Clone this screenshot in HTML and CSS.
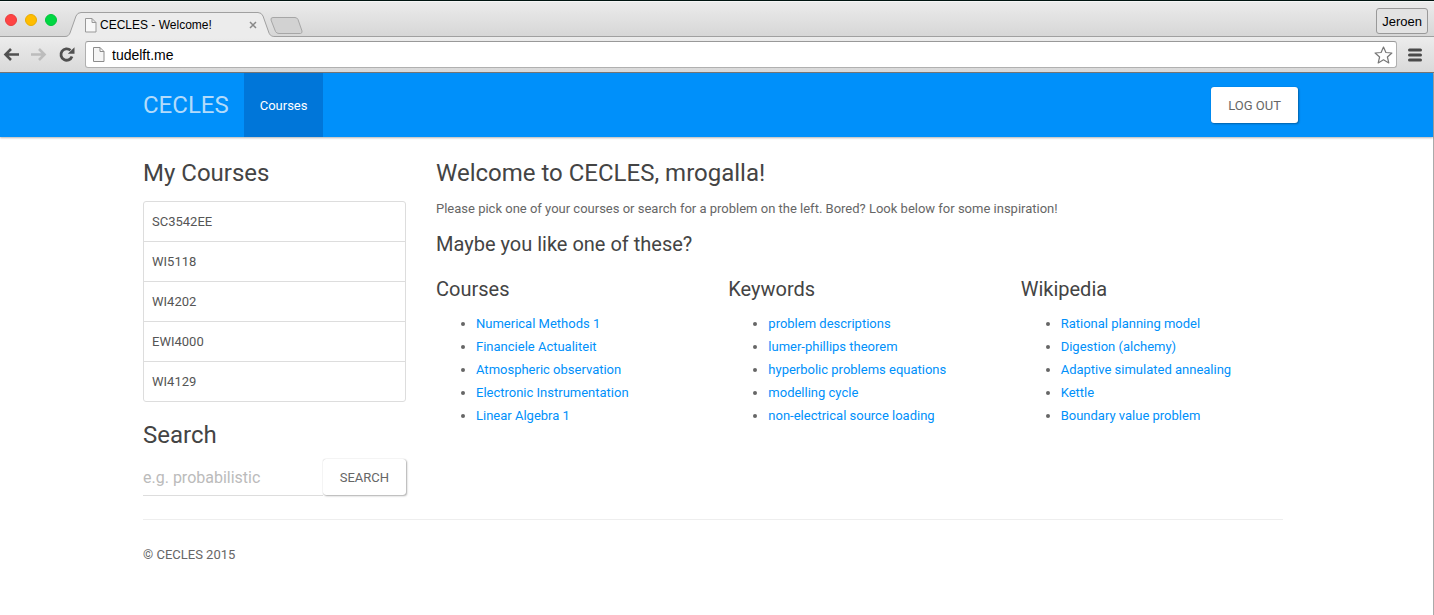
FILE: index.html
```html
<!DOCTYPE html>
<html lang="en">
<head>
<meta charset="utf-8">
<title>CECLES - Welcome!</title>
<link rel="stylesheet" href="styles.css">
</head>
<body>
<div class="browser">
  <div class="titlebar">
    <div class="lights"><span class="light red"></span><span class="light yellow"></span><span class="light green"></span></div>
    <div class="tab">
      <svg class="tab-shape" width="210" height="25" viewBox="0 0 210 25" aria-hidden="true">
        <path d="M0 24.5C3 24.5 4 23 5 21L11 4Q12.500 .5 16 .5H193Q196.500 .5 198 4L204 21C205 23 206 24.500 210 24.500V25H0Z" fill="#ececec"/>
        <path d="M0 24.500C3 24.500 4 23 5 21L11 4Q12.500 .5 16 .5H193Q196.500 .5 198 4L204 21C205 23 206 24.500 210 24.500" fill="none" stroke="#a0a0a0"/>
      </svg>
      <div class="tab-content">
        <svg width="12" height="15" viewBox="0 0 12 15" aria-hidden="true"><path d="M.5.5H7L11 4.500V14H.5ZM7 .5V4.500H11" fill="#f8f8f8" stroke="#999"/></svg>
        <span class="tab-title">CECLES - Welcome!</span>
        <button class="tab-close" aria-label="Close tab"><svg width="8" height="8" viewBox="0 0 8 8"><path d="M1 1L7 7M7 1L1 7" stroke="#888" stroke-width="1.500"/></svg></button>
      </div>
    </div>
    <button class="new-tab" aria-label="New tab"><svg width="33" height="17" viewBox="0 0 33 17"><path d="M3 .5H25Q27 .5 28 2.500L32 14Q32.500 16 30.500 16.500H9Q6.500 16.500 5.500 14.500L1 3Q.5.5 3 .5Z" fill="#d2d2d2" stroke="#a6a6a6"/></svg></button>
    <button class="profile">Jeroen</button>
  </div>
  <div class="toolbar">
    <div class="history">
      <button aria-label="Back"><svg width="18" height="16" viewBox="0 0 18 16"><path d="M17 7.500H3M9 2L3.500 7.500L9 13" fill="none" stroke="#505050" stroke-width="2.600"/></svg></button>
      <button aria-label="Forward"><svg width="18" height="16" viewBox="0 0 18 16"><path d="M1 7.500H15M9 2L14.500 7.500L9 13" fill="none" stroke="#bcbcbc" stroke-width="2.600"/></svg></button>
      <button aria-label="Reload"><svg width="18" height="16" viewBox="0 0 18 16"><path d="M12.500 3.300A5.700 5.700 0 1 0 14 9.500" fill="none" stroke="#505050" stroke-width="2.800"/><path d="M16.500 .3V6.700H9.800Z" fill="#505050"/></svg></button>
    </div>
    <div class="address">
      <svg width="12" height="15" viewBox="0 0 12 15" aria-hidden="true"><path d="M.5.5H7L11 4.500V14.500H.5ZM7 .5V4.500H11" fill="#f5f5f5" stroke="#8c8c8c"/></svg>
      <input class="url" type="text" value="tudelft.me" aria-label="Address">
      <button class="star" aria-label="Bookmark"><svg width="19" height="18" viewBox="0 0 19 18"><path d="M9.500 1L11.900 6.500L17.900 7L13.400 11L14.800 16.900L9.500 13.800L4.200 16.900L5.600 11L1.100 7L7.100 6.500Z" fill="#fff" stroke="#777" stroke-width="1.200" stroke-linejoin="round"/></svg></button>
    </div>
    <button class="menu" aria-label="Menu"><svg width="14" height="14" viewBox="0 0 14 14"><path d="M1.500 2H12.500M1.500 7H12.500M1.500 12H12.500" stroke="#4a4a4a" stroke-width="3" stroke-linecap="round"/></svg></button>
  </div>
</div>
<div class="page">
  <nav class="navbar">
    <div class="container nav-row">
      <a class="brand" href="#">CECLES</a>
      <a class="nav-link" href="#">Courses</a>
      <button class="btn logout">LOG OUT</button>
    </div>
  </nav>
  <div class="content">
    <div class="container">
      <div class="columns">
        <aside class="sidebar">
          <h3>My Courses</h3>
          <ul class="course-list">
            <li><a href="#">SC3542EE</a></li>
            <li><a href="#">WI5118</a></li>
            <li><a href="#">WI4202</a></li>
            <li><a href="#">EWI4000</a></li>
            <li><a href="#">WI4129</a></li>
          </ul>
          <h3><label for="q">Search</label></h3>
          <form class="search">
            <input id="q" type="text" placeholder="e.g. probabilistic">
            <button class="btn" type="button">SEARCH</button>
          </form>
        </aside>
        <main class="main">
          <h3>Welcome to CECLES, mrogalla!</h3>
          <p>Please pick one of your courses or search for a problem on the left. Bored? Look below for some inspiration!</p>
          <h4>Maybe you like one of these?</h4>
          <div class="suggestions">
            <section>
              <h4>Courses</h4>
              <ul>
                <li><a href="#">Numerical Methods 1</a></li>
                <li><a href="#">Financiele Actualiteit</a></li>
                <li><a href="#">Atmospheric observation</a></li>
                <li><a href="#">Electronic Instrumentation</a></li>
                <li><a href="#">Linear Algebra 1</a></li>
              </ul>
            </section>
            <section>
              <h4>Keywords</h4>
              <ul>
                <li><a href="#">problem descriptions</a></li>
                <li><a href="#">lumer-phillips theorem</a></li>
                <li><a href="#">hyperbolic problems equations</a></li>
                <li><a href="#">modelling cycle</a></li>
                <li><a href="#">non-electrical source loading</a></li>
              </ul>
            </section>
            <section>
              <h4>Wikipedia</h4>
              <ul>
                <li><a href="#">Rational planning model</a></li>
                <li><a href="#">Digestion (alchemy)</a></li>
                <li><a href="#">Adaptive simulated annealing</a></li>
                <li><a href="#">Kettle</a></li>
                <li><a href="#">Boundary value problem</a></li>
              </ul>
            </section>
          </div>
        </main>
      </div>
      <footer class="footer">© CECLES 2015</footer>
    </div>
  </div>
</div>
</body>
</html>
```

FILE: styles.css
```css
* { box-sizing: border-box; }
body {
  margin: 0;
  min-height: 100vh;
  display: flex;
  flex-direction: column;
  background: #fff;
  color: #666;
  font: 13px/23px Roboto, "Liberation Sans", sans-serif;
}
button { margin: 0; padding: 0; border: 0; background: none; font: inherit; color: inherit; }
svg { display: block; }
a { color: #0090fa; text-decoration: none; }

/* Browser window */
.browser {
  border-top: 1px solid #001410;
  border-bottom: 1px solid #777;
  background: #e4e4e4;
  font-family: "Liberation Sans", Arial, sans-serif;
  color: #000;
}
.titlebar {
  display: flex;
  height: 36px;
  align-items: flex-end;
  background: linear-gradient(#ececec, #d6d6d6);
  box-shadow: inset 0 -1px #a0a0a0, inset 0 1px #f6f6f6;
}
.lights { display: flex; gap: 8px; padding: 0 12px 11px 5px; }
.light { width: 12px; height: 12px; border-radius: 50%; }
.red { background: #ff4444; border: 1px solid #e93d3d; }
.yellow { background: #ffbd00; border: 1px solid #e8ac00; }
.green { background: #00d742; border: 1px solid #00c53b; }
.tab { display: grid; width: 210px; margin-left: -4px; }
.tab-shape, .tab-content { grid-area: 1 / 1; }
.tab-content { display: flex; align-items: center; padding: 1px 18px 0 20px; }
.tab-title { flex: 1; padding-left: 3px; font-size: 12px; white-space: nowrap; }
.new-tab { margin: 0 auto 3px -5px; }
.profile {
  height: 26px;
  margin: 0 6px 3px 0;
  padding: 0 5px;
  border: 1px solid #999;
  border-radius: 3px;
  background: #e3e3e3;
  font-size: 13px;
}
.toolbar {
  display: flex;
  height: 35px;
  align-items: center;
  background: linear-gradient(#ececec, #d9d9d9);
}
.history { display: flex; gap: 10px; padding: 0 9px 0 2px; }
.address {
  flex: 1;
  display: flex;
  align-items: center;
  height: 27px;
  padding: 0 3px 0 7px;
  border: 1px solid #b0b0b0;
  border-top-color: #999;
  border-radius: 3px;
  background: #fff;
}
.url { flex: 1; min-width: 0; padding: 0 7px; border: 0; outline: 0; background: none; font: 14px "Liberation Sans", Arial, sans-serif; color: #000; }
.menu { margin: 0 12px 0 11px; }

/* Page */
.page { flex: 1; border-right: 1px solid #aaa; }
.navbar, .content { padding-right: 7px; }
.container { width: 100%; max-width: 1170px; margin: 0 auto; padding: 0 15px; }
.navbar { background: #0090fa; box-shadow: 0 1px 2px rgba(0, 0, 0, .3); }
.nav-row { display: flex; height: 64px; align-items: center; padding-right: 0; }
.brand { padding-right: 15px; font-size: 24px; color: #b2dbfb; }
.nav-link { align-self: stretch; display: flex; align-items: center; padding: 0 16px; background: #0076d9; color: #fff; }
.btn {
  height: 36px;
  padding: 0 17px;
  border-radius: 3px;
  background: #fff;
  box-shadow: 1px 1px 2px rgba(0, 0, 0, .3), 0 0 1px rgba(0, 0, 0, .3);
}
.logout { margin-left: auto; }

h3, h4 { margin: 0 0 11px; font-weight: 400; color: #444; }
h3 { font-size: 24px; line-height: 26px; }
h4 { font-size: 20px; line-height: 22px; }
p { margin: 0 0 13px; }
.columns { display: grid; grid-template-columns: 263px 1fr; gap: 30px; padding: 23px 0; border-bottom: 1px solid #eee; }
.course-list { margin: 15px 0 20px; padding: 0; list-style: none; border: 1px solid #ddd; border-radius: 3px; }
.course-list li { padding: 8px; }
.course-list li + li { border-top: 1px solid #ddd; }
.course-list a { color: #555; }
.search { display: flex; }
.search input {
  flex: 1;
  min-width: 0;
  height: 37px;
  padding: 0;
  border: 0;
  border-bottom: 1px solid #ddd;
  outline: 0;
  font: 16px Roboto, "Liberation Sans", sans-serif;
}
.search input::placeholder { color: #bbb; }
.suggestions { display: grid; grid-template-columns: repeat(3, 1fr); gap: 30px; padding-top: 12px; }
.suggestions ul { margin: 0; padding-left: 40px; }
.suggestions h4 { margin-bottom: 12px; }
.footer { padding: 23px 0; }
```
